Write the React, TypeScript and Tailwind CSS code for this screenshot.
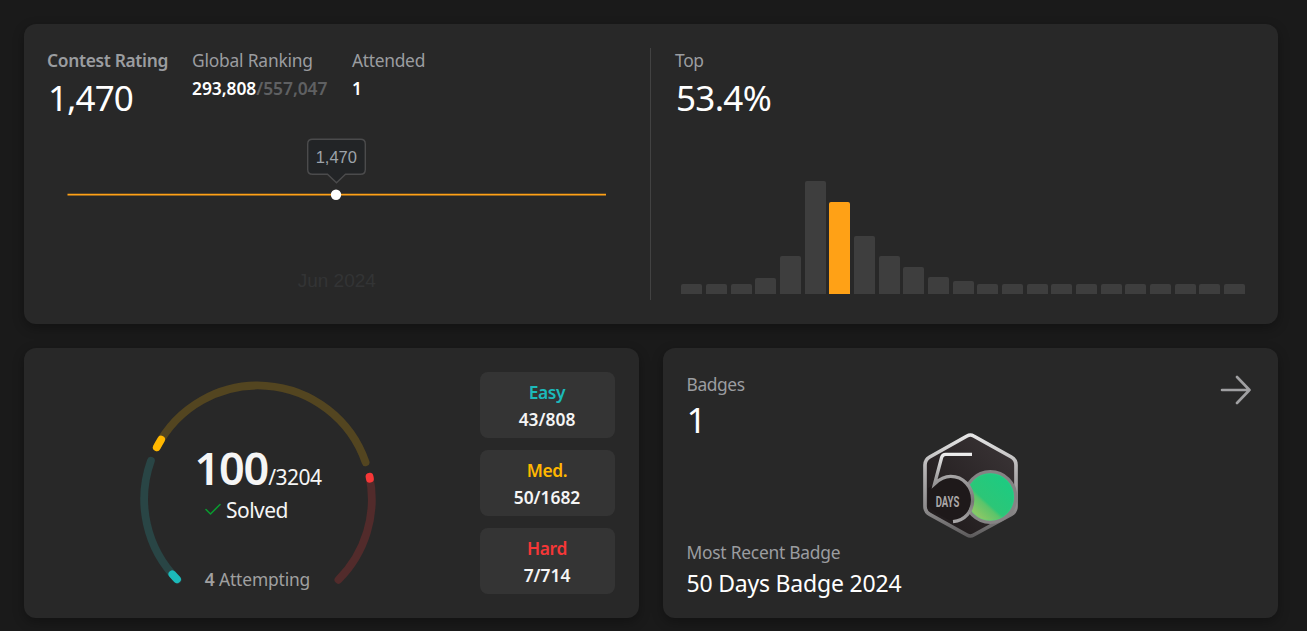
import React from "react";

const CARD = "rounded-xl bg-[#282828] shadow-[0_4px_12px_rgba(0,0,0,0.3)]";

const BARS = [10, 10, 10, 16, 38.5, 113, 92.5, 58, 38.5, 27, 17.5, 13, 10, 10, 10, 10, 10, 10, 10, 10, 10, 10, 10];

const CX = 128;
const CY = 129.3;
const R = 113.8;

function arc(from: number, to: number) {
  const p = (deg: number) => {
    const a = (deg * Math.PI) / 180;
    return `${(CX + R * Math.cos(a)).toFixed(2)} ${(CY + R * Math.sin(a)).toFixed(2)}`;
  };
  return `M${p(from)}A${R} ${R} 0 0 1 ${p(to)}`;
}

function RatingChart() {
  return (
    <svg className="block h-[175px] w-[578px] shrink-0" viewBox="48 125 578 175">
      <path d="M67.5 194.7H606" stroke="#ffa116" strokeWidth="1.7" />
      <path
        d="M312.5 139.3H360.5Q365.3 139.3 365.3 144V169.5Q365.3 174.3 360.5 174.3H345.5L336.5 182.8L327.5 174.3H312.5Q307.7 174.3 307.7 169.5V144Q307.7 139.3 312.5 139.3Z"
        fill="#222426"
        stroke="#4b4b4c"
        strokeWidth="1.4"
      />
      <text x="336.3" y="163" textAnchor="middle" fontFamily="Liberation Sans, sans-serif" fontSize="16.5" fill="#9da3aa">
        1,470
      </text>
      <circle cx="336" cy="194.7" r="5.2" fill="#fff" />
      <text x="336.8" y="287" textAnchor="middle" fontFamily="Liberation Sans, sans-serif" fontSize="19" fill="#333435">
        Jun 2024
      </text>
    </svg>
  );
}

function Distribution() {
  return (
    <div className="flex h-[113px] w-[564px] items-end justify-between">
      {BARS.map((h, i) => (
        <div
          key={i}
          className={`w-[21px] rounded-t-[2px] ${i === 6 ? "bg-[#ffa116]" : "bg-[#3e3e3e]"}`}
          style={{ height: h }}
        />
      ))}
    </div>
  );
}

function Gauge() {
  return (
    <svg className="col-start-1 row-start-1 h-[230px] w-[260px]" viewBox="0 0 260 230" fill="none" strokeWidth="7.8" strokeLinecap="round">
      <path d={arc(135, 199.8)} stroke="#294545" />
      <path d={arc(135.4, 138.8)} stroke="#1cbaba" />
      <path d={arc(207.2, 341)} stroke="#534520" />
      <path d={arc(207.2, 211.6)} stroke="#ffb700" />
      <path d={arc(348.6, 405)} stroke="#522b2b" />
      <path d={arc(348.6, 349.6)} stroke="#f63737" />
    </svg>
  );
}

function Stat({ name, value, color }: { name: string; value: string; color: string }) {
  return (
    <div className="flex h-[66px] w-[135px] flex-col items-center rounded-lg bg-[#343434] pt-[7px] text-[17.4px] leading-[27px] font-semibold">
      <div className={`-ml-px tracking-[-0.4px] ${color}`}>{name}</div>
      <div className="-ml-px text-[#f5f5f5]">{value}</div>
    </div>
  );
}

function Badge() {
  return (
    <svg className="h-[130px] w-[140px]" viewBox="0 0 420 390" fill="none">
      <defs>
        <linearGradient id="rim" x1="0" y1="0" x2="0" y2="1">
          <stop offset="0" stopColor="#e6e6e6" />
          <stop offset="0.35" stopColor="#b4b2b3" />
          <stop offset="0.75" stopColor="#8b898a" />
          <stop offset="1" stopColor="#5e5c5d" />
        </linearGradient>
        <linearGradient id="face" x1="0" y1="1" x2="1" y2="0">
          <stop offset="0" stopColor="#1c1718" />
          <stop offset="1" stopColor="#3c3638" />
        </linearGradient>
        <linearGradient id="green" x1="0.25" y1="0.85" x2="0.8" y2="0.25">
          <stop offset="0" stopColor="#8ac766" />
          <stop offset="0.3" stopColor="#5cc46a" />
          <stop offset="0.38" stopColor="#2cc677" />
          <stop offset="1" stopColor="#1fca80" />
        </linearGradient>
        <linearGradient id="five" gradientUnits="userSpaceOnUse" x1="0" y1="98" x2="0" y2="308">
          <stop offset="0" stopColor="#f2f2f2" />
          <stop offset="0.35" stopColor="#a3a1a2" />
          <stop offset="0.7" stopColor="#777576" />
          <stop offset="1" stopColor="#aaa8a9" />
        </linearGradient>
      </defs>
      <path
        d="M201 48Q211 42 221 48L334 111Q348 119 348 135V259Q348 275 334 283L221 345Q211 351 201 345L89 283Q75 275 75 259V135Q75 119 89 111Z"
        fill="url(#face)"
        stroke="url(#rim)"
        strokeWidth="11"
      />
      <circle cx="271" cy="231" r="76" fill="url(#green)" stroke="#858384" strokeWidth="10" />
      <circle cx="271" cy="231" r="70" stroke="#35dd91" strokeOpacity="0.45" strokeWidth="2" />
      <path d="M106 192Q125 170 153 170A68 68 0 0 1 215 239Q213 287 158 306L110 280L84 258V205Z" fill="#1e191a" />
      <path d="M216 103H137Q128 103 125 112L104 191C120 176 135 169 152 169C190 169 218 201 218 239C218 275 195 301 159 305" stroke="url(#five)" strokeWidth="10" />
      <text
        x="107"
        y="262"
        textLength="71"
        lengthAdjust="spacingAndGlyphs"
        fontFamily="Roboto, sans-serif"
        fontWeight="700"
        fontSize="46"
        fill="#aaa7a8"
      >
        DAYS
      </text>
    </svg>
  );
}

export default function App() {
  return (
    <div className="flex h-[631px] w-[1307px] flex-col gap-6 overflow-hidden bg-[#1a1a1a] p-6 font-['Noto_Sans',sans-serif] text-[17.4px] leading-6 text-[#9b9da0]">
      <section className={`flex h-[300px] w-[1254px] shrink-0 py-6 ${CARD}`}>
        <div className="flex w-[626px] flex-col pl-6">
          <div className="flex h-[77px]">
            <div className="w-[144px] shrink-0">
              <div className="-ml-px font-semibold tracking-[-0.33px]">Contest Rating</div>
              <div className="text-[35px] leading-[52px] tracking-[-0.9px] text-white">1,470</div>
            </div>
            <div className="w-[160px] shrink-0">
              <div className="tracking-[-0.2px]">Global Ranking</div>
              <div className="mt-1 font-semibold tracking-[-0.04px] text-[#5f6062]">
                <span className="text-white">293,808</span>/557,047
              </div>
            </div>
            <div>
              <div className="tracking-[-0.3px]">Attended</div>
              <div className="mt-1 font-semibold text-white">1</div>
            </div>
          </div>
          <RatingChart />
        </div>
        <div className="flex h-[252px] flex-col justify-between border-l border-[#424242] pl-6">
          <div>
            <div className="tracking-[-0.3px]">Top</div>
            <div className="pl-px text-[35px] leading-[52px] tracking-[-0.7px] text-white">53.4%</div>
          </div>
          <div className="pb-[6px] pl-[6.3px]">
            <Distribution />
          </div>
        </div>
      </section>

      <div className="flex w-[1254px] gap-6">
        <section className={`flex h-[270px] w-[615px] items-start justify-between pt-6 pr-6 pl-[106px] ${CARD}`}>
          <div className="-mt-[2px] grid h-[230px] w-[260px]">
            <Gauge />
            <div className="col-start-1 row-start-1 flex flex-col items-center pt-[69px] text-[#f5f5f5]">
              <div className="mr-[4px] h-[58px] leading-[58px] whitespace-nowrap">
                <span className="text-[45px] font-semibold tracking-[-1.2px]">100</span>
                <span className="text-[21px] tracking-[-0.5px]">/3204</span>
              </div>
              <div className="-mt-[1px] mr-[28px] flex items-center gap-[4px] text-[21px] leading-[28px] tracking-[-0.5px]">
                <svg className="h-[18px] w-[18px]" viewBox="0 0 18 18" fill="none" stroke="#0a9a30" strokeWidth="1.6" strokeLinecap="round" strokeLinejoin="round">
                  <path d="M2 8.5L6.5 13L16 3.5" />
                </svg>
                Solved
              </div>
              <div className="mt-[43px] mr-[5px] tracking-[-0.15px] text-[#a0a0a0]">
                <span className="font-semibold">4</span> Attempting
              </div>
            </div>
          </div>
          <div className="flex flex-col gap-3">
            <Stat name="Easy" value="43/808" color="text-[#1cbaba]" />
            <Stat name="Med." value="50/1682" color="text-[#ffb700]" />
            <Stat name="Hard" value="7/714" color="text-[#f63737]" />
          </div>
        </section>

        <section className={`grid h-[270px] w-[615px] grid-cols-[237px_140px_1fr] py-6 pr-[27px] ${CARD}`}>
          <div className="flex h-[228px] flex-col justify-between pl-[23.5px] whitespace-nowrap">
            <div>
              <div className="tracking-[-0.4px]">Badges</div>
              <div className="text-[35px] leading-[47px] text-white">1</div>
            </div>
            <div>
              <div className="tracking-[-0.25px]">Most Recent Badge</div>
              <div className="mt-[3px] text-[23px] leading-[33px] tracking-[-0.2px] text-white">50 Days Badge 2024</div>
            </div>
          </div>
          <div className="pt-12">
            <Badge />
          </div>
          <svg className="ml-auto h-9 w-9" viewBox="0 0 36 36" fill="none" stroke="#a0a0a2" strokeWidth="2.6" strokeLinecap="round" strokeLinejoin="round">
            <path d="M7 18H34.5M22 5L34.5 18L22 31" />
          </svg>
        </section>
      </div>
    </div>
  );
}
